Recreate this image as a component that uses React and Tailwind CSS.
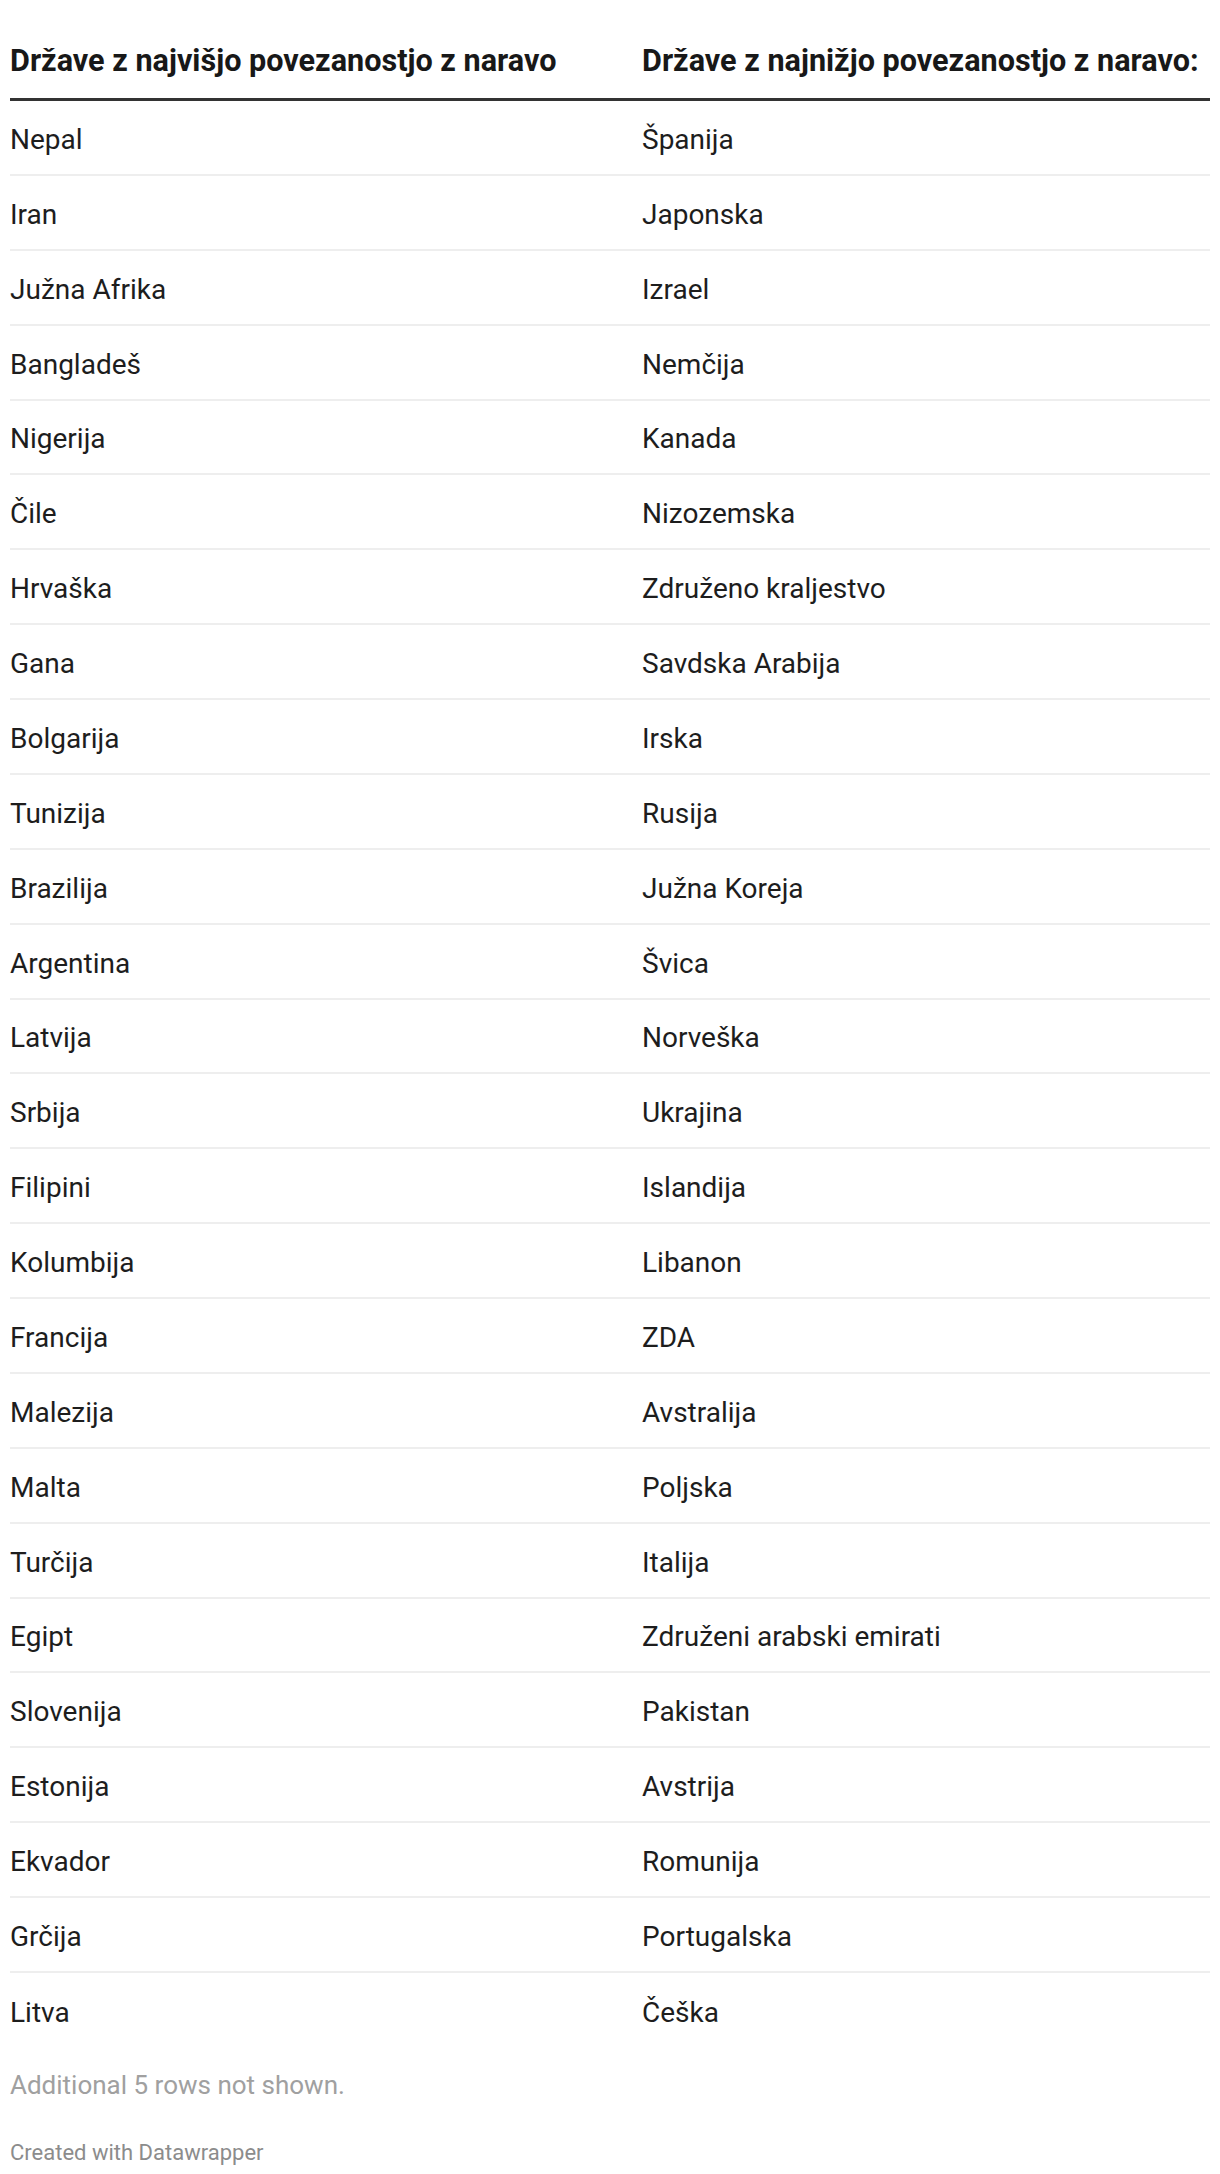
import React from "react";

const rows = [
  ["Nepal", "Španija"],
  ["Iran", "Japonska"],
  ["Južna Afrika", "Izrael"],
  ["Bangladeš", "Nemčija"],
  ["Nigerija", "Kanada"],
  ["Čile", "Nizozemska"],
  ["Hrvaška", "Združeno kraljestvo"],
  ["Gana", "Savdska Arabija"],
  ["Bolgarija", "Irska"],
  ["Tunizija", "Rusija"],
  ["Brazilija", "Južna Koreja"],
  ["Argentina", "Švica"],
  ["Latvija", "Norveška"],
  ["Srbija", "Ukrajina"],
  ["Filipini", "Islandija"],
  ["Kolumbija", "Libanon"],
  ["Francija", "ZDA"],
  ["Malezija", "Avstralija"],
  ["Malta", "Poljska"],
  ["Turčija", "Italija"],
  ["Egipt", "Združeni arabski emirati"],
  ["Slovenija", "Pakistan"],
  ["Estonija", "Avstrija"],
  ["Ekvador", "Romunija"],
  ["Grčija", "Portugalska"],
  ["Litva", "Češka"],
];

const App = () => {
  return (
    <div className="bg-white w-[1220px] min-h-[2174px] px-[10px] font-['Roboto',sans-serif] text-[#1d1d1d]">
      <div className="w-[1200px]">
        {/* header */}
        <div className="flex items-end h-[101px] pb-[21px] border-b-[3px] border-[#333333] text-[30.6px] font-bold text-[#181818] leading-none">
          <div className="w-[632px] shrink-0">Države z najvišjo povezanostjo z naravo</div>
          <div>Države z najnižjo povezanostjo z naravo:</div>
        </div>

        {/* rows */}
        {rows.map((r, i) => (
          <div
            key={i}
            className={
              i === rows.length - 1
                ? "flex items-center h-[74.88px] pt-[5px] text-[28px]"
                : "flex items-center h-[74.88px] pt-[5px] text-[28px] border-b-2 border-[#eeeeee]"
            }
          >
            <div className="w-[632px] shrink-0">{r[0]}</div>
            <div>{r[1]}</div>
          </div>
        ))}

        <div className="mt-[18px] text-[26px] text-[#a0a0a0]">Additional 5 rows not shown.</div>
        <div className="mt-[31px] text-[22px] text-[#8c8c8c]">Created with Datawrapper</div>
      </div>
    </div>
  );
};

export default App;
